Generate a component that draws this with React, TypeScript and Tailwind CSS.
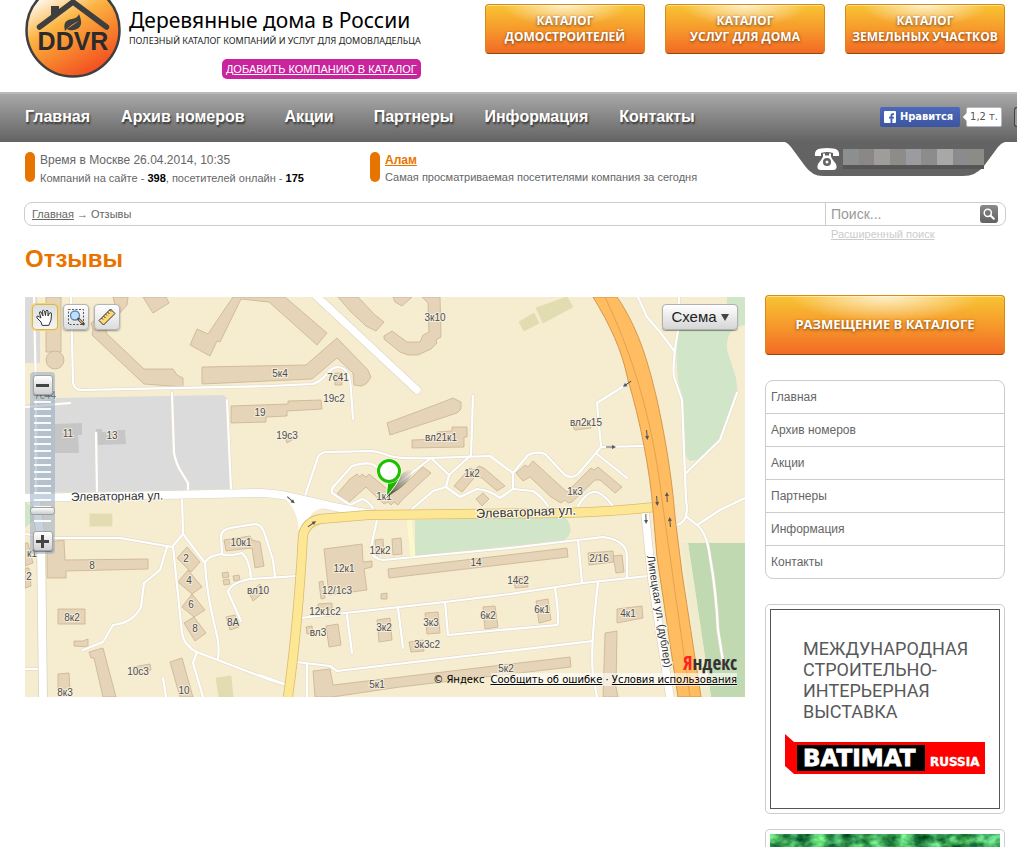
import React from 'react';

const NAV = ['Главная', 'Архив номеров', 'Акции', 'Партнеры', 'Информация', 'Контакты'];

const CATALOGS = [
  ['КАТАЛОГ', 'ДОМОСТРОИТЕЛЕЙ'],
  ['КАТАЛОГ', 'УСЛУГ ДЛЯ ДОМА'],
  ['КАТАЛОГ', 'ЗЕМЕЛЬНЫХ УЧАСТКОВ'],
];

const GLOSSY =
  "rounded border border-[#d98a12] border-b-[#8f4a06] bg-[radial-gradient(ellipse_40%_45%_at_50%_0%,rgba(255,255,255,0.75),rgba(255,255,255,0)),linear-gradient(#f8c433,#f69a2c_50%,#f26a25)] text-center font-['Open_Sans',sans-serif] font-bold text-white shadow-[inset_0_1px_0_rgba(255,255,255,0.45)] [text-shadow:0_1px_3px_rgba(110,50,0,0.9)]";

const BUILDINGS = [
  '46,297 61,297 61,352 46,352',
  '128,297 127,305 107,327 106,333 144,369 173,369 177,375 183,378 183,387 144,384 92,335 93,330 91,323 115,305 113,297',
  '143,297 153,313 169,303 166,297',
  '233,297 208,334 197,329 190,345 210,356 217,341 220,342 241,299 269,302 317,345 327,333 285,297',
  '202,367 306,365 337,338 368,370 371,377 367,383 362,386 354,385 353,373 337,358 312,379 202,384',
  '231,406 288,404 288,401 321,400 322,409 287,411 287,416 266,417 266,422 231,423',
  '335,373 342,373 342,385 335,385',
  '338,297 358,297 375,315 384,322 376,331 366,326 350,311',
  '440,297 441,337 436,340 437,343 431,349 418,355 408,355 400,352 384,339 384,336 392,331 407,342 420,342 423,335 429,332 428,303 422,297',
  '393,297 412,297 402,306 395,302',
  '387,423 443,402 453,398 461,402 461,409 457,413 390,435',
  '412,440 437,439 437,432 452,431 452,427 467,427 467,437 464,437 464,447 412,448',
  '573,427 590,424 591,428 575,430',
  '285,437 290,434 292,440 287,443',
  '337,494 350,479 357,474 360,477 362,474 366,477 369,474 391,492 398,490 423,467 431,473 402,500 398,505 394,502 391,505 388,502 384,504 366,487 348,503',
  '454,486 470,468 474,470 479,466 484,468 505,486 497,491 482,478 475,477 462,492',
  '476,499 483,493 489,499 482,506',
  '516,473 525,465 528,467 533,461 567,492 591,468 594,470 598,467 622,487 615,493 600,480 595,480 572,502 568,503 565,500 561,503 551,497 530,477 523,481',
  '47,542 64,540 65,560 148,559 148,569 66,571 66,578 47,578',
  '58,609 85,609 85,624 58,624',
  '74,641 83,641 88,639 88,647 74,646',
  '89,652 103,648 116,697 103,697 94,658 91,658',
  '58,674 69,673 70,690 58,690',
  '133,667 150,664 151,670 135,675',
  '170,662 182,658 193,697 180,697',
  '177,558 187,547 200,562 191,572',
  '178,582 188,570 202,587 192,594',
  '182,607 192,594 205,610 194,617',
  '184,623 194,617 206,633 195,641',
  '224,540 250,536 252,540 260,542 264,566 255,568 252,548 226,551',
  '222,573 228,572 229,577 223,578',
  '223,580 229,579 230,584 224,585',
  '233,576 239,575 240,580 234,581',
  '249,593 260,584 264,592 253,601',
  '226,617 235,615 239,627 230,630',
  '25,543 28,543 33,563 25,566',
  '25,568 29,568 31,586 25,588',
  '324,549 362,544 363,562 372,561 372,567 364,569 367,590 329,595',
  '319,582 323,581 325,598 321,599',
  '318,604 332,603 332,610 318,611',
  '375,540 383,539 384,554 376,555',
  '392,539 401,538 402,554 393,555',
  '388,569 567,548 568,557 389,578',
  '381,594 387,593 387,599 381,599',
  '306,627 312,626 313,633 307,634',
  '326,626 338,624 341,645 329,647',
  '377,620 390,618 392,640 379,642',
  '425,613 438,612 440,633 427,634',
  '409,642 423,640 424,651 411,652',
  '483,607 495,606 498,627 485,629',
  '536,601 548,599 551,620 539,623',
  '514,577 527,576 528,587 515,588',
  '588,553 613,551 614,562 589,565',
  '613,556 622,555 624,572 616,573',
  '617,609 642,606 643,618 617,623',
  '605,633 617,631 616,687 618,697 603,697',
  '313,671 330,669 333,685 570,657 571,667 400,687 332,697 315,697',
];

const LANES = [
  'M71,297 L73,383 Q75,390 81,390 L270,386 L312,384 C325,382 328,367 338,367 C348,368 350,376 351,390 L353,419',
  'M34,297 L36,395 L36,500',
  'M172,393 L174,453 Q176,463 180,470 L188,483 L188,491',
  'M96,433 L97,492',
  'M227,400 L231,489',
  'M25,407 L70,403',
  'M473,396 L471,455',
  'M305,496 L318,457 Q321,452 327,452 L372,451 Q380,452 390,456 Q400,459 431,458 L490,456 L513,473 L513,489 L500,498 Q490,490 477,489 L460,497 L446,487 L433,491 L412,509',
  'M513,473 L528,455 Q537,451 545,454 L565,475 Q572,479 578,474 L601,447 L597,403 L630,382',
  'M601,447 L643,446',
  'M597,454 L627,478',
  'M513,489 L533,491 Q540,495 548,506',
  'M578,506 Q585,494 593,492 Q600,490 613,506',
  'M431,458 L449,475 L471,455',
  'M449,475 L446,487',
  'M431,458 L400,482',
  'M377,520 Q373,502 362,499 L350,505 L332,493 Q331,488 335,485 L352,466 Q370,460 378,468',
  'M638,297 L647,317 L660,332 L675,352',
  'M679,297 L678,330 Q672,365 674,377 L682,400 L686,500 Q690,522 676,525',
  'M737,393 L720,440 L686,473',
  'M687,517 L697,525 L720,510 L745,498',
  'M697,525 Q707,533 710,557 Q716,590 718,630 L724,668',
  'M377,520 L371,547 Q370,558 383,560 L510,548 L578,540 L603,537 Q627,540 627,557 L627,577',
  'M578,540 L582,583',
  'M300,618 L445,602 L510,594 L583,583 L648,576',
  'M347,615 L352,653',
  'M398,608 L403,648',
  'M445,602 L448,635 L500,630 L557,625 Q560,622 555,588',
  'M296,662 L330,666 L337,671 L500,652 L593,641',
  'M598,583 Q590,650 593,675 L597,697',
  'M307,664 L307,697',
  'M260,675 L287,685',
  'M25,534 L55,538 L120,538 L172,547 L183,534 L182,497',
  'M183,534 L205,563',
  'M173,547 L182,633 Q184,646 197,652 L270,680 L287,685',
  'M205,563 C208,620 222,635 218,659',
  'M205,563 Q207,556 222,554 L221,535 Q222,530 230,528 L255,524 Q262,524 265,535 L273,560 L275,577',
  'M222,554 Q226,557 242,553 Q250,560 251,579',
  'M241,621 L228,592 Q230,583 250,579 L297,576',
  'M167,547 L160,570 L144,583 L141,607 Q133,623 113,625 L103,642 L83,650',
  'M197,652 L193,663 L203,697',
  'M163,678 L166,697',
  'M25,669 L42,669',
];

const LABELS: [number, number, string][] = [
  [435, 321, '3к10'], [280, 377, '5к4'], [338, 381, '7с41'], [334, 402, '19с2'], [260, 416, '19'],
  [287, 439, '19с3'], [68, 437, '11'], [112, 439, '13'], [45, 399, '7с44'], [441, 441, 'вл21к1'],
  [586, 426, 'вл2к15'], [472, 477, '1к2'], [575, 495, '1к3'], [384, 500, '1к1'], [241, 546, '10к1'],
  [186, 562, '2'], [189, 584, '4'], [191, 608, '6'], [195, 632, '8'], [92, 569, '8'],
  [258, 594, 'вл10'], [233, 626, '8А'], [72, 621, '8к2'], [138, 675, '10с3'], [65, 696, '8к3'],
  [184, 694, '10'], [380, 554, '12к2'], [344, 572, '12к1'], [337, 594, '12/1с3'], [325, 615, '12к1с2'],
  [318, 636, 'вл3'], [384, 631, '3к2'], [431, 626, '3к3'], [427, 648, '3к3с2'], [488, 619, '6к2'],
  [542, 613, '6к1'], [518, 584, '14с2'], [476, 566, '14'], [599, 562, '2/16'], [628, 617, '4к1'],
  [506, 672, '5к2'], [377, 688, '5к1'], [32, 557, 'к1'], [29, 580, '2'],
];

const ARROWS: [number, number, number][] = [
  [627, 384, 145], [611, 447, 0], [647, 435, 85], [657, 501, 85], [667, 497, -93], [670, 522, -95],
  [646, 519, 88], [291, 500, 42], [312, 524, -35],
];

function MapCanvas() {
  return (
    <svg className="block h-full w-full" viewBox="25 297 720 400" preserveAspectRatio="xMidYMid slice" role="img" aria-label="Карта">
      <rect x="25" y="297" width="720" height="400" fill="#f6edd1" />
      <path d="M25,297 37,297 40,330 40,363 25,363z M25,405 55,398 223,395 228,399 231,489 25,493z" fill="#dbdbdb" />
      <path d="M55,424 82,423 82,435 78,435 79,453 55,453z M96,429 102,429 102,432 116,432 116,430 125,430 126,444 97,445z" fill="#c6c6c6" />
      <path d="M727,297 L745,297 745,325 Q725,328 727,350 Q733,368 736,378 Q738,388 737,397 L720,440 L697,460 L690,461 Q684,458 684,440 L681,390 Q675,380 677,325 L727,325z" fill="#d1e5c9" />
      <path d="M415,520 L565,517 Q572,525 570,533 Q568,540 560,541 L500,547 L415,557z M25,502 Q36,508 34,520 L25,528z" fill="#d1e5c9" />
      <path d="M688,543 745,543 745,697 711,697z" fill="#c0d9b0" />
      <path d="M681,543 688,543 711,697 701,697z" fill="#efecce" />
      <path d="M536,308 567,297 573,307 543,323z M519,322 534,313 539,323 524,331z M90,514h22v12h-22z M216,678 231,676 233,697 219,697z" fill="#e2dcb2" stroke="#e6d9a6" strokeWidth="0.7" />
      <g fill="#e6d4b8" stroke="#c9b28f" strokeWidth="0.8">
        {BUILDINGS.map((p) => <polygon key={p} points={p} />)}
        <circle cx="55" cy="360" r="9" />
      </g>
      <g fill="none" strokeLinecap="round" strokeLinejoin="round">
        <g stroke="#e3dccb" strokeWidth="3.4">{LANES.map((d) => <path key={d} d={d} />)}</g>
        <g stroke="#fff" strokeWidth="2.2">{LANES.map((d) => <path key={d} d={d} />)}</g>
        <path d="M312,292 L417,390" stroke="#ddd5c2" strokeWidth="8.6" />
        <path d="M312,292 L417,390" stroke="#fff" strokeWidth="7.4" />
        <path d="M36,500 L41,540 L43,697" stroke="#d9d2c2" strokeWidth="9.5" />
        <path d="M36,500 L41,540 L43,697" stroke="#fff" strokeWidth="8" />
        <path d="M645,512 L652,580 L670,697" stroke="#ddd5c2" strokeWidth="9" />
        <path d="M645,512 L652,580 L670,697" stroke="#fff" strokeWidth="7.6" />
        <path d="M20,498 L260,493 C290,493 325,508 375,514" stroke="#d9d2c2" strokeWidth="9" />
        <path d="M20,498 L260,493 C290,493 325,508 375,514" stroke="#fff" strokeWidth="8" />
        <path d="M409,518 L413,557" stroke="#fdf8cc" strokeWidth="5" strokeLinecap="butt" />
      </g>
      <path d="M280,495 Q298,506 299,532 L309,524 Q308,510 325,508 L300,497z" fill="#fff" />
      <g fill="none">
        <path d="M655,507 Q610,512 560,513 L368,515 L320,519 Q306,522 303,535 C300,590 296,640 288,697" stroke="#d8bd70" strokeWidth="10" />
        <path d="M655,507 Q610,512 560,513 L368,515 L320,519 Q306,522 303,535 C300,590 296,640 288,697" stroke="#fde794" strokeWidth="8.4" />
      </g>
      <path d="M593,297 C610,325 622,350 628,380 C640,420 650,470 653,510 L657,557 L678,697 L701,697 L682,573 L675,517 C673,490 668,450 657,400 C650,370 640,330 617,297z" fill="#ffbc60" stroke="#d6974a" />
      <path d="M605,297 C640,370 655,440 662,500 L690,697" fill="none" stroke="#dc9c4e" strokeWidth="0.8" />
      <g stroke="#555" fill="#555" strokeWidth="1">
        {ARROWS.map(([x, y, a]) => (
          <g key={`${x}-${y}`} transform={`translate(${x} ${y}) rotate(${a})`}>
            <path d="M-5,0H3" />
            <path d="M1,-2L5,0L1,2z" stroke="none" />
          </g>
        ))}
      </g>
      <g fontFamily="Liberation Sans, sans-serif" fontSize="10" fill="#4e4e4e" textAnchor="middle" stroke="#f8f2e2" strokeWidth="2" strokeOpacity="0.8" paintOrder="stroke">
        {LABELS.map(([x, y, t]) => <text key={`${x}-${y}`} x={x} y={y}>{t}</text>)}
      </g>
      <g fontFamily="Liberation Sans, sans-serif" fontSize="12" fill="#333" stroke="#fff" strokeWidth="2" strokeOpacity="0.8" paintOrder="stroke">
        <text x="71" y="501" transform="rotate(-1 71 501)">Элеваторная ул.</text>
        <text x="476" y="518" fontSize="13" transform="rotate(-2 476 518)">Элеваторная ул.</text>
        <text x="647" y="556" fontSize="11" transform="rotate(81 647 556)">Липецкая ул. (дублер)</text>
      </g>
      <defs>
        <linearGradient id="pinShade" x1="0" y1="1" x2="1" y2="0">
          <stop offset="0" stopColor="#000" stopOpacity="0.7" />
          <stop offset="1" stopColor="#000" stopOpacity="0" />
        </linearGradient>
      </defs>
      <path d="M386,498 C394,492 413,482 412,470 Q406,468 396,480z" fill="url(#pinShade)" />
      <path d="M386,497 L388,480 L400,476 Q398,484 386,497z" fill="#1db200" stroke="#fff" strokeWidth="1" />
      <circle cx="389" cy="471" r="12.500" fill="#fff" />
      <circle cx="389" cy="471" r="10.500" fill="#fff" stroke="#1fc000" strokeWidth="3" />
    </svg>
  );
}

const TOOL =
  'flex size-[26px] items-center justify-center rounded border bg-gradient-to-b from-white to-[#dcdcdc] shadow-[0_1px_2px_rgba(0,0,0,0.4)]';

const ZOOM_BUTTON =
  'flex size-5 items-center justify-center rounded-[3px] border border-[#a5a5a5] bg-gradient-to-b from-white to-[#d0d0d0] shadow-[0_1px_1px_rgba(0,0,0,0.4)]';

function MapPanel() {
  return (
    <section className="relative mt-[2px] h-[400px] min-w-0 flex-1 overflow-hidden" aria-label="Карта проезда">
      <MapCanvas />
      <div className="absolute left-[7px] top-[7px] flex gap-[5px]">
        <button aria-label="Переместить карту" className="flex size-[26px] items-center justify-center rounded border border-[#d8b650] bg-gradient-to-b from-[#dedede] to-[#f4f4f4] ring-1 ring-[#f6d567]">
          <svg width="20" height="20" viewBox="0 0 20 20" fill="#fff" stroke="#333" strokeWidth="1" strokeLinejoin="round" strokeLinecap="round">
            <path d="M7 18 L6 15 L2 11 Q1 9 3 9 L6 11 L4.500 6 Q4.500 4 6 5 L8 9 L7.500 4 Q8 2 9.500 4 L10.500 8.500 L11 4 Q12 2 13 4 L13 9 L14.500 6 Q16.500 5 16.500 7 L16 13 L14 18z" />
          </svg>
        </button>
        <button aria-label="Увеличить область" className={`${TOOL} border-[#b4b4b4]`}>
          <svg width="20" height="20" viewBox="0 0 20 20" fill="none">
            <rect x="2.500" y="2.500" width="15" height="15" stroke="#555" strokeDasharray="2 1.500" />
            <circle cx="9" cy="8.500" r="4.500" fill="#bfe0fb" stroke="#5a86b6" strokeWidth="1.300" />
            <path d="M12.500 12l5 5" stroke="#444" strokeWidth="2.600" strokeLinecap="round" />
            <path d="M13 12.500l3.500 3.500" stroke="#e8b65a" strokeWidth="1.200" />
          </svg>
        </button>
        <button aria-label="Измерить расстояние" className={`${TOOL} border-[#b4b4b4]`}>
          <svg width="20" height="20" viewBox="0 0 20 20" fill="none" stroke="#333">
            <path d="M2 13.500 L13.500 2 L18 6.500 L6.500 18z" fill="#fbd978" />
            <path d="M4.500 11l1.500 1.500M6.500 9l2 2M8.500 7l1.500 1.500M10.500 5l2 2M12.500 3l1.500 1.500" strokeWidth="1" />
          </svg>
        </button>
      </div>
      <button className="absolute right-[7px] top-[7px] flex h-[26px] w-[76px] items-center justify-center gap-1 rounded border border-[#b0b0b0] bg-gradient-to-b from-white to-[#d6d6d6] text-[15px] text-[#222] shadow-[0_1px_1px_rgba(0,0,0,0.4)]">
        Схема
        <svg width="8" height="8" viewBox="0 0 8 8" aria-hidden="true"><path d="M0 1h8l-4 7z" fill="#444" /></svg>
      </button>
      <div className="absolute left-[5px] top-[75px] flex h-[182px] w-[25px] flex-col items-center justify-between rounded bg-[#8fa5c0]/50 p-[3px]">
        <button aria-label="Отдалить" className={ZOOM_BUTTON}>
          <span className="h-[3px] w-[13px] bg-[#444]" />
        </button>
        <div className="my-[6px] w-[17px] flex-1 bg-[repeating-linear-gradient(#fff_0_2px,transparent_2px_7px)] opacity-90" />
        <button aria-label="Приблизить" className={ZOOM_BUTTON}>
          <svg width="13" height="13" viewBox="0 0 13 13" aria-hidden="true"><path d="M5 0h3v5h5v3h-5v5h-3v-5h-5v-3h5z" fill="#444" /></svg>
        </button>
        <span className="absolute left-0 top-[135px] h-[8px] w-[25px] rounded-[3px] border border-[#a0a0a0] bg-gradient-to-b from-white to-[#ccc]" />
      </div>
      <div className="absolute bottom-0 right-[8px] flex flex-col items-end font-['DejaVu_Sans',sans-serif] text-black">
        <span className="font-['Liberation_Sans_Narrow','Open_Sans_Condensed','DejaVu_Sans_Condensed',sans-serif] text-[19px] leading-5 text-[#333]"><span className="text-[#f22]">Я</span>ндекс</span>
        <div className="mb-[11px] flex whitespace-nowrap text-[10px] leading-[13px]">
          <span>© Яндекс</span>
          <span className="ml-[6px] bg-white/60"><a className="underline" href="#error">Сообщить об ошибке</a> · <a className="underline" href="#terms">Условия использования</a></span>
        </div>
      </div>
    </section>
  );
}

function Logo() {
  return (
    <svg className="-mt-[18px] size-24 shrink-0" viewBox="0 0 96 96" role="img" aria-label="DDVR">
      <defs>
        <linearGradient id="logoFill" x1="0.15" y1="0" x2="0.7" y2="1">
          <stop offset="0.1" stopColor="#fff" />
          <stop offset="0.42" stopColor="#fbb543" />
          <stop offset="0.65" stopColor="#f88a30" />
          <stop offset="1" stopColor="#f1491f" />
        </linearGradient>
      </defs>
      <circle cx="48" cy="48" r="46.500" fill="url(#logoFill)" stroke="#3f3f3f" strokeWidth="2.500" />
      <path d="M14.500 45 L48 20 L81.500 45" fill="none" stroke="#3f3f3f" strokeWidth="5.500" strokeLinecap="round" />
      <path d="M26 34 V24 H34 V28z" fill="#3f3f3f" />
      <path d="M40 49 Q37 38 47 37 Q53 36 54 32 Q60 46 49 48 Q44 49 42 47 L54 39 Q46 42 40 49z" fill="#3f3f3f" />
      <text x="48" y="68" textAnchor="middle" fontFamily="Liberation Sans, sans-serif" fontWeight="700" fontSize="25" fill="#2b2b2b">DDVR</text>
    </svg>
  );
}

function Header() {
  return (
    <header className="flex h-[92px] items-start justify-between pl-[25px] pr-3">
      <div className="flex items-start">
        <Logo />
        <div className="ml-2 flex flex-col pt-2 font-['Noto_Sans',sans-serif]">
          <span className="whitespace-nowrap text-[21px] leading-6 text-black">Деревянные дома в России</span>
          <span className="mt-[3px] whitespace-nowrap text-[9px] leading-3 text-[#222]">ПОЛЕЗНЫЙ КАТАЛОГ КОМПАНИЙ И УСЛУГ ДЛЯ ДОМОВЛАДЕЛЬЦА</span>
          <a href="#add" className="mt-3 self-end rounded-[5px] bg-[#c9239d] px-1 font-['Liberation_Sans',sans-serif] text-[11px] leading-5 text-white underline">ДОБАВИТЬ КОМПАНИЮ В КАТАЛОГ</a>
        </div>
      </div>
      <div className="flex gap-5 pt-1">
        {CATALOGS.map(([a, b]) => (
          <button key={b} className={`${GLOSSY} h-[50px] w-40 whitespace-nowrap text-[12px] leading-4`}>
            {a}<br />{b}
          </button>
        ))}
      </div>
    </header>
  );
}

const MOSAIC = ['bg-[#8b8f8f]', 'bg-[#8b8786]', 'bg-[#9f9d9b]', 'bg-[#8e8c89]', 'bg-[#9a9c9f]', 'bg-[#8c8c8c]', 'bg-[#a8a8a6]', 'bg-[#8b8b8d]', 'bg-[#8d8b86]'];

function NavBar() {
  return (
    <nav className="relative flex h-[50px] items-center justify-between overflow-x-clip border-t-2 border-t-[#b9b9b9] bg-gradient-to-b from-[#a8a8a8] to-[#636363] pl-[25px]">
      <ul className="flex gap-[31px] pb-[2px] text-[16px] font-bold text-white [text-shadow:1px_2px_2px_rgba(0,0,0,0.6)]">
        {NAV.map((n) => (
          <li key={n} className={n === 'Акции' ? 'px-[9px]' : ''}><a href="#nav">{n}</a></li>
        ))}
      </ul>
      <div className="flex items-center pb-[2px]">
        <button className="flex h-5 w-20 items-center gap-1 rounded-[2px] bg-gradient-to-b from-[#4c69ba] to-[#3b55a0] pl-1 font-['DejaVu_Sans_Condensed','DejaVu_Sans',sans-serif] text-[11px] font-bold text-white">
          <svg width="12" height="12" viewBox="0 0 12 12" aria-hidden="true"><rect width="12" height="12" rx="1" fill="#fff" /><path d="M6.500 12V7.500H5V5.700h1.500V4.300Q6.500 2.200 8.700 2.200H10V4H9Q8.400 4 8.400 4.600V5.700H10L9.800 7.500H8.400V12z" fill="#4461b0" /></svg>
          Нравится
        </button>
        <span className="relative ml-[6px] flex h-5 w-9 items-center justify-center rounded-[2px] border border-[#b5b9c6] bg-white font-['DejaVu_Sans_Condensed','DejaVu_Sans',sans-serif] text-[11px] text-[#555]">
          <span className="absolute -left-[3px] top-[6px] size-[6px] rotate-45 bg-white" />1,2 т.
        </span>
        <span className="ml-3 h-5 w-[3px] rounded-l border border-r-0 border-[#444] bg-[#999]" />
      </div>
      <div className="absolute right-[12px] top-full flex h-[34px] w-[220px] items-center pl-[29px]">
        <svg className="absolute inset-0 h-full w-full" viewBox="0 0 220 34" preserveAspectRatio="none" aria-hidden="true">
          <path d="M0 0H220Q216 1 213 5L199 24Q191 34 178 34H38Q27 34 20 24L6 5Q3 1 0 0z" fill="#636363" />
        </svg>
        <svg className="relative" width="26" height="23" viewBox="0 0 26 23" role="img" aria-label="Телефон">
          <path d="M1 8Q0 1 7 0.500Q13 -0.500 19 0.500Q26 1 25 8L19 8V5Q13 3 7 5V8z" fill="#fff" />
          <path d="M9 5.500h2v2h4v-2h2v3Q18 11 22 16Q24 22 19 22H7Q2 22 4 16Q8 11 9 8.500z" fill="#fff" />
          <circle cx="13" cy="14" r="4" fill="#636363" /><circle cx="13" cy="14" r="1.500" fill="#fff" />
        </svg>
        <div className="relative ml-[3px] flex h-5 w-[141px] border-b-4 border-b-[#565656]">
          {MOSAIC.map((c) => <span key={c} className={`h-4 flex-1 ${c}`} />)}
        </div>
      </div>
    </nav>
  );
}

function InfoBar() {
  return (
    <div className="flex h-[60px] pl-[25px] pt-[10px] text-[#666]">
      <div className="flex w-[345px] gap-[5px]">
        <span className="h-[30px] w-[10px] rounded-[5px] bg-[#e87400]" />
        <div className="whitespace-nowrap">
          <p className="text-[12px] leading-4">Время в Москве 26.04.2014, 10:35</p>
          <p className="text-[11px] leading-5">Компаний на сайте - <b className="text-black">398</b>, посетителей онлайн - <b className="text-black">175</b></p>
        </div>
      </div>
      <div className="flex gap-[5px]">
        <span className="h-[30px] w-[10px] rounded-[5px] bg-[#e87400]" />
        <div className="whitespace-nowrap">
          <p className="text-[12px] leading-4"><a href="#alam" className="font-bold text-[#e87400] underline">Алам</a></p>
          <p className="text-[11px] leading-[18px]">Самая просматриваемая посетителями компания за сегодня</p>
        </div>
      </div>
    </div>
  );
}

function Breadcrumbs() {
  return (
    <div className="mx-[11px] ml-6">
      <div className="flex h-6 items-center rounded-[8px] border border-[#ccc] text-[11px] text-[#666]">
        <div className="flex-1 pl-[7px]"><a href="#home" className="underline">Главная</a> → Отзывы</div>
        <form className="flex h-full w-[180px] items-center border-l border-[#ccc] pl-[5px] pr-[7px]">
          <input aria-label="Поиск" placeholder="Поиск..." className="min-w-0 flex-1 text-[14px] outline-none placeholder:text-[#999]" />
          <button type="button" aria-label="Найти" className="flex size-[18px] items-center justify-center rounded-[3px] bg-gradient-to-b from-[#8a8a8a] to-[#606060]">
            <svg width="12" height="12" viewBox="0 0 12 12" fill="none" stroke="#fff" aria-hidden="true"><circle cx="4.800" cy="4.800" r="3.600" strokeWidth="1.500" /><path d="M7.500 7.500l3.300 3.300" strokeWidth="2" strokeLinecap="round" /></svg>
          </button>
        </form>
      </div>
      <div className="flex justify-end">
        <a href="#search" className="w-[175px] text-[11px] leading-4 text-[#ccc] underline">Расширенный поиск</a>
      </div>
    </div>
  );
}

function Sidebar() {
  return (
    <aside className="flex w-60 shrink-0 flex-col">
      <button className={`${GLOSSY} h-[60px] whitespace-nowrap text-[13px]`}>РАЗМЕЩЕНИЕ В КАТАЛОГЕ</button>
      <ul className="mt-[25px] divide-y divide-[#ccc] rounded-[8px] border border-[#ccc] text-[12px] text-[#666]">
        {NAV.map((n) => <li key={n} className="pl-[5px] leading-8"><a href="#menu">{n}</a></li>)}
      </ul>
      <a href="#batimat" className="mt-[25px] rounded-[5px] border border-[#ccc] p-1">
        <div className="flex h-[200px] flex-col border border-[#555] pl-[14px] pt-[28px]">
          <p className="pl-[18px] font-['Roboto',sans-serif] text-[18px] leading-[21px] text-[#58595b]">МЕЖДУНАРОДНАЯ<br />СТРОИТЕЛЬНО-<br />ИНТЕРЬЕРНАЯ<br />ВЫСТАВКА</p>
          <svg className="mt-[12px]" width="200" height="40" viewBox="0 0 200 40" role="img" aria-label="BATIMAT RUSSIA">
            <path d="M0 0L9 8H200V40H9L0 32z" fill="#f00" />
            <rect x="12" y="11" width="128" height="26" fill="#000" />
            <g fill="#fff" stroke="#fff" fontFamily="DejaVu Sans, sans-serif" fontWeight="700">
              <text x="18" y="32" fontSize="23" strokeWidth="0.8">BATIMAT</text>
              <text x="145" y="32" fontSize="12" strokeWidth="0.4">RUSSIA</text>
            </g>
          </svg>
        </div>
      </a>
      <div className="mt-[15px] h-[18px] rounded-t-[5px] border border-b-0 border-[#ccc] px-1 pt-1">
        <svg className="block h-full w-full" viewBox="0 0 230 13" preserveAspectRatio="none" aria-hidden="true">
          <defs>
            <filter id="leaves" x="0" y="0" width="1" height="1" colorInterpolationFilters="sRGB">
              <feTurbulence type="fractalNoise" baseFrequency="0.07 0.1" numOctaves="3" seed="4" />
              <feColorMatrix values="0.9 0 0 0 -0.2  1.2 0 0 0 0.05  0.8 0.2 0 0 -0.15  0 0 0 0 1" />
            </filter>
          </defs>
          <rect width="230" height="13" filter="url(#leaves)" />
        </svg>
      </div>
    </aside>
  );
}

export default function App() {
  return (
    <div className="bg-white font-['Liberation_Sans',Arial,sans-serif]">
      <Header />
      <NavBar />
      <InfoBar />
      <Breadcrumbs />
      <main className="pl-[25px] pr-3">
        <h1 className="mt-[2px] h-[51px] text-[24px] font-bold leading-[30px] text-[#e87400]">Отзывы</h1>
        <div className="flex items-start gap-5">
          <MapPanel />
          <Sidebar />
        </div>
      </main>
    </div>
  );
}
